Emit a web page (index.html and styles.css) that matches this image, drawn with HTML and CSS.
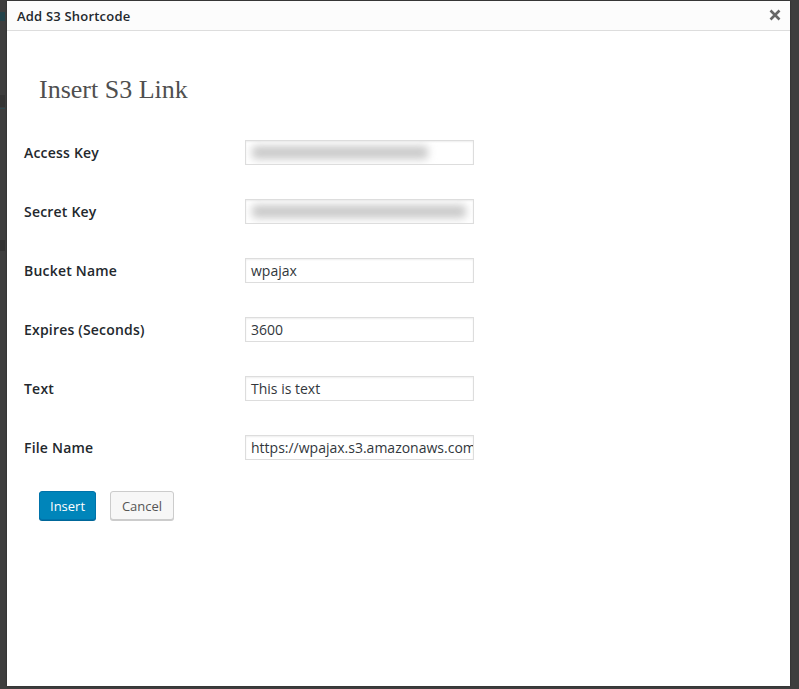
FILE: index.html
```html
<!DOCTYPE html>
<html>
<head>
<meta charset="utf-8">
<link rel="stylesheet" href="styles.css">
</head>
<body>
<div class="backdrop">
  <div class="under">
    <span class="frag f1"></span>
    <span class="frag f2"></span>
    <span class="frag f3"></span>
    <span class="frag f4"></span>
  </div>
  <div class="modal">
    <div class="modal-head">
      <span class="modal-title">Add S3 Shortcode</span>
      <svg class="close" width="12" height="12" viewBox="0 0 12 12"><path d="M1.5 1.5 L10.5 10.5 M10.5 1.5 L1.5 10.5" stroke="#666" stroke-width="2.6" stroke-linecap="butt"/></svg>
    </div>
    <div class="modal-body">
      <h2 class="page-title">Insert S3 Link</h2>
      <div class="form-table">
        <div class="row"><label>Access Key</label><div class="input"><span class="blur b1"></span></div></div>
        <div class="row"><label>Secret Key</label><div class="input"><span class="blur b2"></span></div></div>
        <div class="row"><label>Bucket Name</label><div class="input">wpajax</div></div>
        <div class="row"><label>Expires (Seconds)</label><div class="input">3600</div></div>
        <div class="row"><label>Text</label><div class="input">This is text</div></div>
        <div class="row"><label>File Name</label><div class="input">https://wpajax.s3.amazonaws.com</div></div>
      </div>
      <div class="actions">
        <button class="btn primary">Insert</button>
        <button class="btn secondary">Cancel</button>
      </div>
    </div>
  </div>
</div>
</body>
</html>
```
FILE: styles.css
```css
html, body {
  margin: 0;
  padding: 0;
  height: 689px;
  overflow: hidden;
}
body {
  background: #3e3e3e;
  font-family: "Open Sans", "Liberation Sans", sans-serif;
}
.backdrop {
  position: relative;
  height: 689px;
  display: flex;
}
.under {
  position: absolute;
  left: 0;
  top: 0;
  width: 7px;
  height: 689px;
  overflow: hidden;
}
.frag {
  position: absolute;
  left: 0;
  width: 5px;
  display: block;
}
.f1 { top: 12px; height: 9px; background: #23434a; }
.f2 { top: 95px; height: 12px; background: #353535; }
.f3 { top: 108px; height: 1px; background: #2d4a52; }
.f4 { top: 240px; height: 11px; background: #333; }
.modal {
  margin: 1px 9px 3px 7px;
  flex: 1;
  background: #fff;
  display: flex;
  flex-direction: column;
  box-shadow: 0 0 2px rgba(0,0,0,.4);
}
.modal-head {
  height: 29px;
  background: #fcfcfc;
  border-bottom: 1px solid #ddd;
  display: flex;
  align-items: center;
  justify-content: space-between;
  padding: 0 9px 0 10px;
}
.modal-title {
  font-size: 13px;
  font-weight: 600;
  color: #23282d;
  letter-spacing: 0.2px;
}
.close { display: block; margin-top: -1px; }
.modal-body {
  padding: 0 0 0 17px;
}
.page-title {
  margin: 44px 0 0 15px;
  font-family: "Liberation Serif", "DejaVu Serif", serif;
  font-weight: normal;
  font-size: 26px;
  color: #4f4f4f;
  height: 48px;
  line-height: 30px;
}
.form-table {
  display: flex;
  flex-direction: column;
}
.row {
  height: 59px;
  display: flex;
  align-items: center;
}
.row label {
  width: 221px;
  font-size: 14px;
  font-weight: 600;
  color: #23282d;
  letter-spacing: 0.2px;
}
.input {
  box-sizing: border-box;
  width: 229px;
  height: 25px;
  border: 1px solid #ddd;
  box-shadow: inset 0 1px 2px rgba(0,0,0,.07);
  font-size: 14px;
  color: #32373c;
  line-height: 23px;
  padding: 0 5px;
  white-space: nowrap;
  overflow: hidden;
  position: relative;
}
.blur {
  position: absolute;
  top: 5px;
  height: 13px;
  left: 6px;
  background: #c9c9c9;
  filter: blur(4px);
  border-radius: 4px;
}
.b1 { width: 176px; }
.b2 { width: 214px; }
.actions {
  display: flex;
  gap: 14px;
  padding: 14px 0 0 15px;
}
.btn {
  box-sizing: border-box;
  height: 29px;
  font-family: "Open Sans", "Liberation Sans", sans-serif;
  font-size: 13px;
  border-radius: 3px;
  padding: 0 10px;
  line-height: 26px;
}
.primary {
  width: 57px;
  background: #0085ba;
  border: 1px solid #0073aa;
  color: #fff;
  box-shadow: 0 1px 0 #006799;
}
.secondary {
  width: 64px;
  background: #f7f7f7;
  border: 1px solid #ccc;
  color: #555;
  box-shadow: 0 1px 0 #ccc;
}
```
